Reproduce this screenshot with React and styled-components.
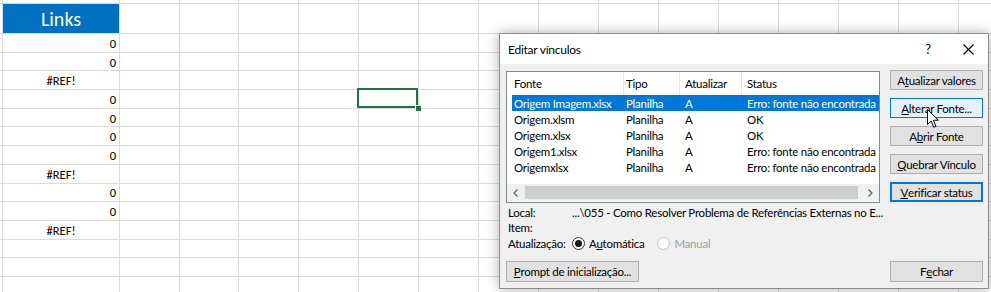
import React from 'react';
import styled, { createGlobalStyle } from 'styled-components';

const Global = createGlobalStyle`
  html, body { margin: 0; padding: 0; background: #fff; overflow: hidden; }
  #root { position: relative; width: 991px; height: 292px; overflow: hidden; }
`;

const UI_FONT = `"Segoe UI", Lato, "Liberation Sans", sans-serif`;

/* ---------- spreadsheet ---------- */
const Sheet = styled.div`
  display: grid;
  grid-template-columns: 3px 117px 60px 59px repeat(14, 60px);
  grid-template-rows: 4px 30px repeat(14, 18.7px);
  font-family: Carlito, Calibri, Lato, "Liberation Sans", sans-serif;
  font-size: 12.5px;
  color: #000;
`;

const Cell = styled.div`
  position: relative;
  box-sizing: border-box;
  border-right: 1px solid #dadada;
  border-bottom: 1px solid #dadada;
  display: flex;
  align-items: center;
  justify-content: ${(p) => (p.$align === 'right' ? 'flex-end' : 'center')};
  padding-right: ${(p) => (p.$align === 'right' ? '3px' : '0')};
  padding-top: 1px;
  background: ${(p) => (p.$header ? '#0070c0' : 'transparent')};
  color: ${(p) => (p.$header ? '#fff' : '#000')};
  font-size: ${(p) => (p.$header ? '20px' : '12.5px')};
  white-space: nowrap;
  ${(p) =>
    p.$selected &&
    `
    &::after {
      content: '';
      position: absolute;
      z-index: 2;
      left: -2px; top: -2px; right: 0; bottom: 0;
      border: 2px solid #217346;
    }
    &::before {
      content: '';
      position: absolute;
      z-index: 3;
      right: -3px; bottom: -3px;
      width: 5px; height: 5px;
      background: #217346;
      border-left: 1px solid #fff;
      border-top: 1px solid #fff;
    }
  `}
`;

const COLS = 18;
const data = ['0', '0', '#REF!', '0', '0', '0', '0', '#REF!', '0', '0', '#REF!', '', '', ''];

function SheetGrid() {
  const rows = [];
  for (let c = 0; c < COLS; c++) rows.push(<Cell key={`t${c}`} />);
  for (let c = 0; c < COLS; c++)
    rows.push(
      <Cell key={`h${c}`} $header={c === 1}>
        {c === 1 ? 'Links' : null}
      </Cell>
    );
  data.forEach((v, r) => {
    for (let c = 0; c < COLS; c++) {
      const isRef = v === '#REF!';
      rows.push(
        <Cell
          key={`r${r}c${c}`}
          $align={c === 1 && !isRef ? 'right' : 'center'}
          $selected={r === 3 && c === 6}
        >
          {c === 1 ? v : null}
        </Cell>
      );
    }
  });
  return <Sheet>{rows}</Sheet>;
}

/* ---------- dialog ---------- */
const Dialog = styled.div`
  position: absolute;
  left: 499px;
  top: 33px;
  width: 490px;
  height: 256px;
  box-sizing: border-box;
  border: 1px solid #8c8c8c;
  background: #f0f0f0;
  box-shadow: 0 0 12px rgba(0, 0, 0, 0.32);
  display: flex;
  flex-direction: column;
  font-family: ${UI_FONT};
  font-size: 11.5px;
  letter-spacing: -0.25px;
  color: #000;
  z-index: 5;
`;

const TitleBar = styled.div`
  height: 30px;
  flex: none;
  background: #fff;
  display: flex;
  align-items: center;
  padding-left: 8px;
`;

const Title = styled.div`
  flex: 1;
  font-size: 12px;
`;

const CaptionButton = styled.div`
  width: 40px;
  height: 30px;
  display: flex;
  align-items: center;
  justify-content: center;
  font-size: 13px;
`;

const Body = styled.div`
  flex: 1;
  display: flex;
  flex-direction: column;
  padding: 7px 5px 6px 6px;
`;

const Main = styled.div`
  display: flex;
  gap: 10px;
  height: 132px;
`;

const ListView = styled.div`
  width: 374px;
  height: 132px;
  box-sizing: border-box;
  border: 1px solid #828790;
  background: #fff;
  display: flex;
  flex-direction: column;
  overflow: hidden;
`;

const ColGrid = styled.div`
  display: grid;
  grid-template-columns: 112px 56px 62px 1fr;
  margin-left: 5px;
`;

const HeaderRow = styled(ColGrid)`
  height: 23px;
  align-items: stretch;
`;

const HeaderCell = styled.div`
  display: flex;
  align-items: center;
  padding-left: ${(p) => p.$pad}px;
  border-right: ${(p) => (p.$last ? 'none' : '1px solid #e5e5e5')};
`;

const Rows = styled.div`
  flex: 1;
`;

const Row = styled(ColGrid)`
  height: 16px;
  align-items: center;
  background: ${(p) => (p.$selected ? '#0078d7' : 'transparent')};
  color: ${(p) => (p.$selected ? '#fff' : '#000')};
`;

const RowCell = styled.div`
  padding-left: ${(p) => p.$pad}px;
  white-space: nowrap;
  overflow: hidden;
`;

const ScrollBar = styled.div`
  height: 17px;
  flex: none;
  display: flex;
  align-items: stretch;
  background: #f0f0f0;
  margin-bottom: 1px;
`;

const ScrollArrow = styled.div`
  width: 17px;
  display: flex;
  align-items: center;
  justify-content: center;
`;

const ScrollTrack = styled.div`
  flex: 1;
  display: flex;
  align-items: center;
  padding: 0 4px 0 1px;
`;

const Thumb = styled.div`
  flex: 1;
  height: 13px;
  background: #cdcdcd;
`;

const ButtonCol = styled.div`
  width: 93px;
  display: flex;
  flex-direction: column;
  gap: 8px;
  margin-top: -1px;
`;

const Button = styled.div`
  box-sizing: border-box;
  height: ${(p) => (p.$h ? p.$h : 20)}px;
  width: ${(p) => (p.$w ? `${p.$w}px` : '100%')};
  display: flex;
  align-items: center;
  justify-content: ${(p) => (p.$left ? 'flex-start' : 'center')};
  padding-left: ${(p) => (p.$left ? '7px' : '0')};
  background: ${(p) => (p.$hover ? '#e5f1fb' : '#e1e1e1')};
  border: 1px solid ${(p) => (p.$hover || p.$default ? '#0078d7' : '#adadad')};
  box-shadow: ${(p) => (p.$default ? 'inset 0 0 0 1px #0078d7' : 'none')};
  white-space: nowrap;
`;

const Key = styled.span`
  text-decoration: underline;
  text-underline-offset: 1px;
`;

const Info = styled.div`
  margin-top: 2px;
  display: flex;
  flex-direction: column;
  padding-left: 2px;
`;

const InfoRow = styled.div`
  height: ${(p) => (p.$h ? p.$h : 15)}px;
  display: flex;
  align-items: center;
`;

const Label = styled.div`
  width: 64px;
  flex: none;
  white-space: nowrap;
`;

const Value = styled.div`
  white-space: nowrap;
`;

const RadioGroup = styled.div`
  display: flex;
  align-items: center;
  color: ${(p) => (p.$disabled ? '#a0a0a0' : '#000')};
  margin-right: 13px;
`;

const RadioCircle = styled.span`
  box-sizing: border-box;
  width: 13px;
  height: 13px;
  border-radius: 50%;
  border: 1px solid ${(p) => (p.$disabled ? '#c4c4c4' : '#333')};
  background: #fff;
  display: inline-flex;
  align-items: center;
  justify-content: center;
  margin-right: 4px;
  &::after {
    content: '';
    width: 7px;
    height: 7px;
    border-radius: 50%;
    background: ${(p) => (p.$checked ? '#1a1a1a' : 'transparent')};
  }
`;

const Footer = styled.div`
  margin-top: auto;
  display: flex;
  justify-content: space-between;
  align-items: flex-end;
`;

const Cursor = styled.svg`
  position: absolute;
  left: 927px;
  top: 109px;
  z-index: 10;
`;

const rowsData = [
  ['Origem Imagem.xlsx', 'Planilha', 'A', 'Erro: fonte não encontrada'],
  ['Origem.xlsm', 'Planilha', 'A', 'OK'],
  ['Origem.xlsx', 'Planilha', 'A', 'OK'],
  ['Origem1.xlsx', 'Planilha', 'A', 'Erro: fonte não encontrada'],
  ['Origemxlsx', 'Planilha', 'A', 'Erro: fonte não encontrada'],
];
const pads = [2, 2, 5, 5];

export default function App() {
  return (
    <>
      <Global />
      <SheetGrid />
      <Dialog>
        <TitleBar>
          <Title>Editar vínculos</Title>
          <CaptionButton>?</CaptionButton>
          <CaptionButton>
            <svg width="11" height="11" viewBox="0 0 11 11">
              <path d="M0.5 0.5 L10.5 10.5 M10.5 0.5 L0.5 10.5" stroke="#000" strokeWidth="1.1" fill="none" />
            </svg>
          </CaptionButton>
        </TitleBar>
        <Body>
          <Main>
            <ListView>
              <HeaderRow>
                {['Fonte', 'Tipo', 'Atualizar', 'Status'].map((h, i) => (
                  <HeaderCell key={h} $pad={pads[i]} $last={i === 3}>
                    {h}
                  </HeaderCell>
                ))}
              </HeaderRow>
              <Rows>
                {rowsData.map((r, ri) => (
                  <Row key={ri} $selected={ri === 0}>
                    {r.map((v, ci) => (
                      <RowCell key={ci} $pad={pads[ci]}>
                        {v}
                      </RowCell>
                    ))}
                  </Row>
                ))}
              </Rows>
              <ScrollBar>
                <ScrollArrow>
                  <svg width="5" height="8" viewBox="0 0 5 8">
                    <path d="M4.5 0.5 L1 4 L4.5 7.5" stroke="#606060" strokeWidth="1.2" fill="none" />
                  </svg>
                </ScrollArrow>
                <ScrollTrack>
                  <Thumb />
                </ScrollTrack>
                <ScrollArrow>
                  <svg width="5" height="8" viewBox="0 0 5 8">
                    <path d="M0.5 0.5 L4 4 L0.5 7.5" stroke="#606060" strokeWidth="1.2" fill="none" />
                  </svg>
                </ScrollArrow>
              </ScrollBar>
            </ListView>
            <ButtonCol>
              <Button>
                A<Key>t</Key>ualizar valores
              </Button>
              <Button $hover>
                <Key>A</Key>lterar Fonte...
              </Button>
              <Button>
                A<Key>b</Key>rir Fonte
              </Button>
              <Button>
                <Key>Q</Key>uebrar Vínculo
              </Button>
              <Button $default>
                <Key>V</Key>erificar status
              </Button>
            </ButtonCol>
          </Main>
          <Info>
            <InfoRow>
              <Label>Local:</Label>
              <Value>...\055 - Como Resolver Problema de Referências Externas no E...</Value>
            </InfoRow>
            <InfoRow>
              <Label>Item:</Label>
            </InfoRow>
            <InfoRow $h={16}>
              <Label>Atualização:</Label>
              <RadioGroup>
                <RadioCircle $checked />
                <span>
                  A<Key>u</Key>tomática
                </span>
              </RadioGroup>
              <RadioGroup $disabled>
                <RadioCircle $disabled />
                <span>Manual</span>
              </RadioGroup>
            </InfoRow>
          </Info>
          <Footer>
            <Button $w={133} $h={21}>
              <Key>P</Key>rompt de inicialização...
            </Button>
            <Button $w={93} $h={21}>
              F<Key>e</Key>char
            </Button>
          </Footer>
        </Body>
      </Dialog>
      <Cursor width="13" height="20" viewBox="0 0 13 20">
        <path
          d="M0.5 0.5 L0.5 15.5 L4.2 12 L6.8 18.3 L9 17.4 L6.4 11.2 L11.3 11.2 Z"
          fill="#fff"
          stroke="#000"
          strokeWidth="1"
          strokeLinejoin="round"
        />
      </Cursor>
    </>
  );
}
